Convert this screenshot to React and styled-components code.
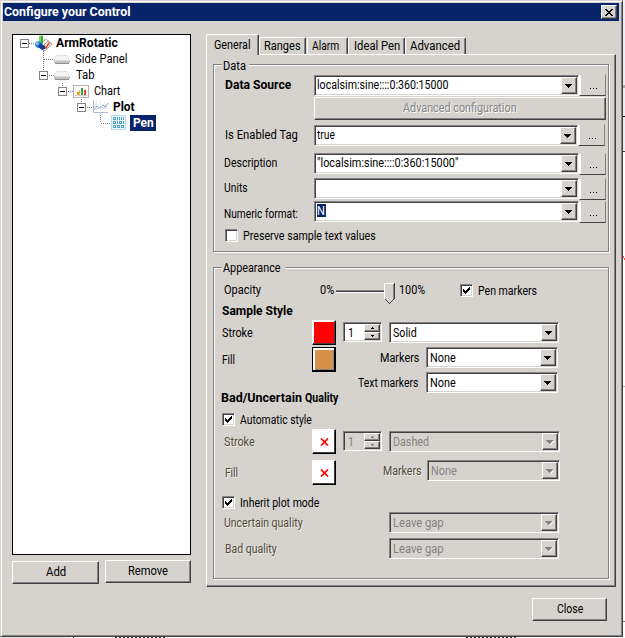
import React, { useLayoutEffect, useRef, useState } from 'react';
import styled, { createGlobalStyle, css } from 'styled-components';

const face = '#d6d3ce';
const shade = '#848284';
const dark = '#424142';
const navy = '#08246b';

const Global = createGlobalStyle`
  * { box-sizing: border-box; }
  html, body { margin: 0; overflow: hidden; }
  body { font: 12.5px/14px Roboto, "Liberation Sans", sans-serif; color: #000; }
  svg { display: block; flex: none; }
`;

const place = css`
  flex: none;
  margin-left: ${p => p.$ml || 0}px;
  margin-top: ${p => p.$mt || 0}px;
`;

const raised = css`
  background: ${face};
  border: 1px solid;
  border-color: #fff ${dark} ${dark} #fff;
  box-shadow: inset -1px -1px ${shade};
`;

const sunken = css`
  border: 1px solid;
  border-color: ${shade} #fff #fff ${shade};
  box-shadow: inset 1px 1px ${dark}, inset -1px -1px ${face};
`;

/* Text set to an exact width */
const TextBox = styled.span`
  ${place}
  display: block;
  width: ${p => p.$w}px;
  height: 14px;
  white-space: nowrap;
  font-weight: ${p => (p.$bold ? 700 : 400)};
  color: ${p => (p.$embossed ? '#4f4b3c' : p.$color || 'inherit')};
  text-shadow: ${p => (p.$embossed ? '1px 1px #eeebe2' : p.$relief ? '1px 1px #fff' : 'none')};
`;
const TextRun = styled.span`
  display: inline-block;
  transform-origin: 0 50%;
`;

function Text({ w, children, ...rest }) {
  const ref = useRef(null);
  const [scale, setScale] = useState(1);
  useLayoutEffect(() => {
    setScale(w / ref.current.offsetWidth);
  }, [w, children]);
  return (
    <TextBox $w={w} {...rest}>
      <TextRun ref={ref} style={{ transform: `scaleX(${scale})` }}>{children}</TextRun>
    </TextBox>
  );
}

const Desktop = styled.div`
  width: 625px;
  height: 638px;
  background:
    linear-gradient(#f44, #f44) 623px 256px / 1px 2px no-repeat,
    linear-gradient(#f44, #f44) 624px 258px / 1px 2px no-repeat,
    linear-gradient(#aaa, #aaa) 623px 85px / 2px 3px no-repeat,
    linear-gradient(#000, #000) 623px 116px / 2px 1px no-repeat,
    linear-gradient(${dark}, ${dark}) 623px 151px / 2px 1px no-repeat,
    linear-gradient(#aaa, #aaa) 623px 386px / 2px 1px no-repeat,
    linear-gradient(#777, #777) 623px 621px / 2px 1px no-repeat,
    linear-gradient(#000, #000) 73px 637px / 1px 1px no-repeat,
    repeating-linear-gradient(90deg, #333 0 2px, #fff 2px 4px) 115px 637px / 51px 1px no-repeat,
    repeating-linear-gradient(90deg, #333 0 2px, #fff 2px 4px) 466px 637px / 52px 1px no-repeat,
    linear-gradient(#e2e2e2, #e2e2e2) 0 637px / 70px 1px no-repeat,
    linear-gradient(#eeeefa 0 150px, #fff 152px);
`;

const Dialog = styled.main`
  width: 623px;
  height: 637px;
  background: ${face};
  border: 1px solid;
  border-color: ${face} ${dark} ${dark} ${face};
  box-shadow: inset 1px 1px #fff, inset -1px -1px ${shade};
  padding: 2px;
`;

const TitleBar = styled.header`
  display: flex;
  justify-content: space-between;
  width: 616px;
  height: 18px;
  padding: 2px 2px 2px 1px;
  background: ${navy};
  color: #fff;
`;
const CloseBox = styled.button`
  ${raised}
  width: 16px;
  height: 14px;
  padding: 2px 3px;
`;

const Body = styled.div`
  display: flex;
  padding: 13px 0 0 9px;
  gap: 15px;
`;
const Side = styled.aside`
  width: 179px;
`;
const TreeBox = styled.div`
  height: 521px;
  background: #fff;
  border: 1px solid #000;
`;
const TreeRow = styled.div`
  display: flex;
  height: 16px;
`;
const Selected = styled.span`
  flex: none;
  width: 26px;
  height: 16px;
  padding: 1px 0 0 3px;
  background: ${navy};
  color: #fff;
`;
const SideButtons = styled.div`
  display: flex;
  gap: 6px;
  padding-top: 5px;
`;
const Button = styled.button`
  ${raised}
  ${place}
  display: flex;
  justify-content: center;
  align-items: center;
  width: ${p => p.$w}px;
  height: ${p => p.$h || 23}px;
  padding: 0 0 2px;
  font: inherit;
  color: ${p => (p.disabled ? shade : '#000')};
`;

const Main = styled.section`
  width: 410px;
`;
const TabStrip = styled.nav`
  display: flex;
  align-items: flex-end;
  height: 20px;
`;
const Tab = styled.div`
  ${place}
  width: ${p => p.$w}px;
  height: ${p => (p.$active ? 21 : 17)}px;
  margin-bottom: ${p => (p.$active ? -1 : 0)}px;
  padding: ${p => (p.$active ? '3px 0 0 7px' : '1px 0 0 4px')};
  position: relative;
  background: ${face};
  border: 1px solid;
  border-color: #fff ${dark} transparent #fff;
  border-bottom: 0;
  border-radius: 2px 2px 0 0;
  box-shadow: inset -1px 0 ${shade};
`;
const Panel = styled.div`
  ${raised}
  height: 533px;
  padding: 9px 0 0 6px;
`;
const Group = styled.section`
  display: flex;
  flex-direction: column;
  width: 396px;
  height: ${p => p.$h}px;
  margin-bottom: 15px;
  border: 1px solid ${shade};
  box-shadow: inset 1px 1px #fff, 1px 1px #fff;
`;
const Legend = styled.div`
  flex: none;
  width: ${p => p.$w}px;
  height: 14px;
  margin: ${p => p.$up}px 0 0 8px;
  padding-left: 1px;
  background: ${face};
`;
const Row = styled.div`
  flex: none;
  display: flex;
  align-items: flex-start;
  height: ${p => p.$h}px;
`;
const Footer = styled.footer`
  display: flex;
  justify-content: flex-end;
  padding: 11px 13px 0 0;
`;

const ComboBox = styled.div`
  ${place}
  ${sunken}
  display: flex;
  justify-content: space-between;
  width: ${p => p.$w}px;
  height: 21px;
  padding: 1px;
  background: ${p => (p.$disabled ? face : '#fff')};
  color: ${p => (p.$disabled ? shade : '#000')};
`;
const ComboText = styled.div`
  padding: ${p => (p.$selected ? '0' : p.$tight ? '1px 0 0 1px' : '2px 0 0 2px')};
`;
const Marked = styled.span`
  display: block;
  width: 9px;
  height: 13px;
  margin: 1px 0 0 1px;
  background: ${navy};
  color: #fff;
  line-height: 13px;
`;
const DropButton = styled.span`
  ${raised}
  flex: none;
  display: flex;
  justify-content: center;
  width: 16px;
  height: 17px;
  padding-top: 6px;
`;

function DownArrow({ disabled }) {
  return (
    <svg width="8" height="5" shapeRendering="crispEdges">
      {disabled && <path d="M7 1h1v1H7v1H6v1H5v1H4V4h1V3h1V2h1z" fill="#fff" />}
      <path d="M0 0h7v1H6v1H5v1H4v1H3V3H2V2H1V1H0z" fill={disabled ? shade : '#000'} />
    </svg>
  );
}

function Combo({ text, w, tw, ml, mt, disabled, marked, tight }) {
  return (
    <ComboBox $w={w} $ml={ml} $mt={mt} $disabled={disabled}>
      <ComboText $selected={marked} $tight={tight}>
        {marked ? <Marked><Text w={8}>{text}</Text></Marked> : text && <Text w={tw}>{text}</Text>}
      </ComboText>
      <DropButton><DownArrow disabled={disabled} /></DropButton>
    </ComboBox>
  );
}

const More = styled.button`
  ${place}
  display: flex;
  justify-content: center;
  align-items: flex-end;
  width: 27px;
  height: 22px;
  padding: 0 0 6px 3px;
  background: ${face};
  border: 1px solid;
  border-color: ${face} ${shade} ${dark} #fff;
  box-shadow: inset 1px 0 #fff;
`;
function MoreButton({ mt }) {
  return (
    <More $mt={mt} aria-label="Browse">
      <svg width="8" height="1" shapeRendering="crispEdges"><path d="M0 0h1v1H0zM3 0h1v1H3zM6 0h1v1H6z" /></svg>
    </More>
  );
}

const Check = styled.span`
  ${sunken}
  ${place}
  width: 13px;
  height: 13px;
  padding: 2px;
  background: #fff;
`;
function CheckBox({ checked, ...rest }) {
  return (
    <Check {...rest}>
      {checked && (
        <svg width="7" height="7" shapeRendering="crispEdges">
          <path d="M0 2h1v1h1v1h1V3h1V2h1V1h1V0h1v3H6v1H5v1H4v1H3v1H2V6H1V5H0z" />
        </svg>
      )}
    </Check>
  );
}

const Swatch = styled.span`
  ${place}
  display: flex;
  align-items: center;
  justify-content: center;
  width: 24px;
  height: 25px;
  background: ${p => p.$fill};
  border: 1px solid;
  border-color: ${p => (p.$focus ? '#000' : '#fff #000 #000 #fff')};
  box-shadow: ${p => (p.$focus
    ? `inset -1px -1px #000, inset 2px 2px #fff, inset -2px -2px ${shade}`
    : `inset -1px -1px ${dark}, inset 1px 1px #fff`)};
`;
function Cross() {
  return (
    <svg width="9" height="8">
      <path d="M1 .5l7 7M8 .5l-7 7" stroke="#f00" strokeWidth="1.700" />
    </svg>
  );
}

const SpinBox = styled.div`
  ${place}
  ${sunken}
  display: flex;
  justify-content: space-between;
  width: 39px;
  height: 20px;
  padding: 1px 1px 1px 4px;
  background: ${p => (p.$disabled ? face : '#fff')};
  color: ${p => (p.$disabled ? shade : '#000')};
`;
const SpinButtons = styled.div`
  display: grid;
  grid-template-rows: 8px 8px;
  width: 16px;
`;
const SpinButton = styled.span`
  ${raised}
  display: flex;
  align-items: center;
  justify-content: center;
`;
function Spinner({ disabled, ...rest }) {
  const fill = disabled ? shade : '#000';
  return (
    <SpinBox $disabled={disabled} {...rest}>
      <Text w={6} $mt={2}>1</Text>
      <SpinButtons>
        <SpinButton><svg width="3" height="2" shapeRendering="crispEdges"><path fill={fill} d="M1 0h1v1h1v1H0V1h1z" /></svg></SpinButton>
        <SpinButton><svg width="3" height="2" shapeRendering="crispEdges"><path fill={fill} d="M0 0h3v1H2v1H1V1H0z" /></svg></SpinButton>
      </SpinButtons>
    </SpinBox>
  );
}

const SliderDrawing = styled.svg`
  ${place}
`;
function Slider() {
  return (
    <SliderDrawing $ml={2} $mt={8} width="60" height="21" shapeRendering="crispEdges">
      <path d="M0 7h48v1H0z" fill={shade} />
      <path d="M0 8h48v1H0z" fill={dark} />
      <path d="M0 9h48v1H0z" fill="#fff" />
      <path d="M48 0h11v16l-5 5-6-5z" fill={face} />
      <path d="M48 0h10v1h-9v15h-1z" fill="#fff" />
      <path d="M57 1h1v15h-1z" fill={shade} />
      <path d="M58 0h1v16h-1zM57 16h1v1h-1zM56 17h1v1h-1zM55 18h1v1h-1zM54 19h1v1h-1zM53 20h1v1h-1zM52 19h1v1h-1zM51 18h1v1h-1zM50 17h1v1h-1zM49 16h1v1h-1z" fill={dark} />
    </SliderDrawing>
  );
}

/* Tree artwork: coordinates start at the inner left edge of the tree */
const Expander = ({ x }) => (
  <g shapeRendering="crispEdges">
    <path d={`M${x} 4h9v9h-9z`} fill={shade} />
    <path d={`M${x + 1} 5h7v7h-7z`} fill="#fff" />
    <path d={`M${x + 2} 8h5v1h-5z`} />
  </g>
);
const Dots = ({ d }) => <path d={d} stroke="#777" strokeDasharray="1 1" fill="none" shapeRendering="crispEdges" />;
const Drive = ({ x }) => (
  <g transform={`translate(${x} 4)`}>
    <path d="M2 0h11l3 5v3H0V5z" fill="#e8e8e6" />
    <path d="M3 0h9l3 5H1z" fill="#f3f3f2" />
    <path d="M0 5h16v3H0z" fill="#c2c2c2" />
    <path d="M1 8.5h14" stroke="#929292" />
    <path d="M3 .5h10M1 5.5h14" stroke="#ddd" />
  </g>
);
const nodeArt = {
  arm: (
    <>
      <Dots d="M16 8.5h6M30.500 15v1" />
      <Expander x={7} />
      <g transform="translate(22 0)">
        <path d="M7 7l4-3 6 5-7 7-5-3z" fill="#eee" stroke="#aaa" />
        <path d="M9 10l4-4 2 2-4 5z" fill="#fff" stroke="#c98d66" />
        <path d="M9 12l2 1 3-5" stroke="#f04818" strokeWidth="1.5" fill="none" />
        <path d="M4 1q2-1 4 0v8H4z" fill="#35b52d" />
        <path d="M4 1h2v8H4z" fill="#75db4f" />
        <circle cx="3.500" cy="9.500" r="3.300" fill="#2784dc" />
        <circle cx="2.500" cy="8.500" r="1.500" fill="#78c4ff" />
        <path d="M5 8l5 3v3l-3 1-4-3z" fill="#153f91" />
      </g>
    </>
  ),
  side: <><Dots d="M30.500 0v16M31 8.500h9" /><Drive x={41} /></>,
  tab: <><Dots d="M30.500 0v4M36 8.500h5" /><Expander x={26} /><Drive x={41} /></>,
  chart: (
    <>
      <Dots d="M49.500 0v4M55 8.500h5" />
      <Expander x={45} />
      <g shapeRendering="crispEdges" transform="translate(60 2)">
        <path d="M0 0h16v13H0z" fill="#b5b2b0" />
        <path d="M1 1h14v11H1z" fill="#fbfaf9" />
        <path d="M2 10h12v1H2z" fill="#d0cfcd" />
        <path d="M4 7h2v3H4z" fill="#e7a025" />
        <path d="M6 5h1v5H6z" fill="#e7bd25" />
        <path d="M8 3h2v7H8z" fill="#29a43a" />
        <path d="M11 5h2v5h-2z" fill="#d7473b" />
      </g>
    </>
  ),
  plot: (
    <>
      <Dots d="M68.500 0v4M74 8.500h6" />
      <Expander x={64} />
      <g transform="translate(80 1)" fill="none">
        <path d="M3.500 1v10M7.500 1v10M11.500 1v10M0 4.500h15M0 8.500h15" stroke="#eef1f5" />
        <path d="M1 10l3-4 3 2 3-3 2 2 3-4" stroke="#889fc0" strokeWidth=".9" />
        <path d="M1 6l4 3 3-3 3 3 3-3" stroke="#b5c5da" strokeWidth=".9" />
        <path d="M.5 0v12.500H15" stroke="#a9bad5" />
      </g>
    </>
  ),
  pen: (
    <>
      <Dots d="M87.500 0v8M88 8.500h10" />
      <g transform="translate(98 0)" shapeRendering="crispEdges" fill="none">
        <path d="M0 0h15v15H0z" fill="#edf8fd" />
        <path d="M.5.500h14v14H.5z" stroke="#b2ddec" />
        <g stroke="#4aa5c6">
          <path d="M2.500 2.500h2v2h-2zM6.500 2v3M8.500 2v3M10.500 2v3M12.500 2v3" />
          <path d="M2.500 6.500h2v2h-2zM6.500 6v3M8.500 6.500h2v2h-2zM12.500 6v3" />
          <path d="M2.500 10.500h2v2h-2zM6.500 10.500h2v2h-2zM10.500 10.500h2v2h-2z" />
        </g>
      </g>
    </>
  ),
};
const nodes = [
  { art: 'arm', label: 'ArmRotatic', start: 43, w: 62, bold: true },
  { art: 'side', label: 'Side Panel', start: 62, w: 52 },
  { art: 'tab', label: 'Tab', start: 63, w: 19 },
  { art: 'chart', label: 'Chart', start: 81, w: 26 },
  { art: 'plot', label: 'Plot', start: 100, w: 22, bold: true },
  { art: 'pen', label: 'Pen', start: 117, w: 21, bold: true, selected: true },
];

function Tree() {
  return (
    <TreeBox>
      {nodes.map(n => (
        <TreeRow key={n.art}>
          <svg width={n.start} height="16">{nodeArt[n.art]}</svg>
          {n.selected
            ? <Selected><Text w={n.w} $bold>{n.label}</Text></Selected>
            : <Text w={n.w} $bold={n.bold} $mt={1}>{n.label}</Text>}
        </TreeRow>
      ))}
    </TreeBox>
  );
}

export default function App() {
  return (
    <Desktop>
      <Global />
      <Dialog>
        <TitleBar>
          <Text w={127} $bold>Configure your Control</Text>
          <CloseBox aria-label="Close">
            <svg width="8" height="7" shapeRendering="crispEdges">
              <path d="M0 0h2v1h1v1h2V1h1V0h2v1H7v1H6v1H5v1h1v1h1v1h1v1H6V6H5V5H3v1H2v1H0V6h1V5h1V4h1V3H2V2H1V1H0z" />
            </svg>
          </CloseBox>
        </TitleBar>
        <Body>
          <Side>
            <Tree />
            <SideButtons>
              <Button $w={87} $mt={1}><Text w={20}>Add</Text></Button>
              <Button $w={86}><Text w={40}>Remove</Text></Button>
            </SideButtons>
          </Side>
          <Main>
            <TabStrip>
              <Tab $w={53} $active><Text w={37}>General</Text></Tab>
              <Tab $w={47}><Text w={37}>Ranges</Text></Tab>
              <Tab $w={41} $ml={1}><Text w={27}>Alarm</Text></Tab>
              <Tab $w={57}><Text w={46} $ml={1}>Ideal Pen</Text></Tab>
              <Tab $w={61}><Text w={50}>Advanced</Text></Tab>
            </TabStrip>
            <Panel>
              <Group $h={188}>
                <Legend $w={27} $up={-6}><Text w={23}>Data</Text></Legend>
                <Row $h={24}>
                  <Text w={66} $bold $ml={11} $mt={5}>Data Source</Text>
                  <Combo tight text="localsim:sine::::0:360:15000" w={265} tw={131} ml={23} mt={2} />
                  <MoreButton mt={1} />
                </Row>
                <Row $h={27}>
                  <Button disabled $w={292} $h={23} $ml={100}><Text w={114} $relief>Advanced configuration</Text></Button>
                </Row>
                <Row $h={28}>
                  <Text w={73} $ml={11} $mt={4}>Is Enabled Tag</Text>
                  <Combo tight text="true" w={264} tw={18} ml={16} mt={1} />
                  <MoreButton mt={0} />
                </Row>
                <Row $h={26}>
                  <Text w={53} $ml={10} $mt={4}>Description</Text>
                  <Combo tight text={'"localsim:sine::::0:360:15000"'} w={265} tw={141} ml={37} mt={1} />
                  <MoreButton mt={1} />
                </Row>
                <Row $h={23}>
                  <Text w={24} $ml={10} $mt={3}>Units</Text>
                  <Combo w={265} ml={66} />
                  <MoreButton />
                </Row>
                <Row $h={27}>
                  <Text w={74} $ml={10} $mt={6}>Numeric format:</Text>
                  <Combo text="N" marked w={265} ml={16} />
                  <MoreButton />
                </Row>
                <Row $h={20}>
                  <CheckBox $ml={11} $mt={1} />
                  <Text w={133} $ml={5} $mt={1}>Preserve sample text values</Text>
                </Row>
              </Group>
              <Group $h={312}>
                <Legend $w={64} $up={-7}><Text w={58}>Appearance</Text></Legend>
                <Row $h={29}>
                  <Text w={37} $ml={10} $mt={8}>Opacity</Text>
                  <Text w={14} $ml={59} $mt={8}>0%</Text>
                  <Slider />
                  <Text w={26} $ml={3} $mt={8}>100%</Text>
                  <CheckBox checked $ml={35} $mt={9} />
                  <Text w={59} $ml={5} $mt={9}>Pen markers</Text>
                </Row>
                <Row $h={16}>
                  <Text w={71} $bold $ml={8}>Sample Style</Text>
                </Row>
                <Row $h={27}>
                  <Text w={31} $ml={8} $mt={6}>Stroke</Text>
                  <Swatch $fill="#f00" $ml={59} />
                  <Spinner $ml={7} $mt={2} />
                  <Combo text="Solid" w={170} tw={24} ml={7} mt={2} />
                </Row>
                <Row $h={25}>
                  <Text w={13} $ml={8} $mt={6}>Fill</Text>
                  <Swatch $fill="#d6924a" $focus $ml={77} />
                  <Text w={39} $ml={44} $mt={4}>Markers</Text>
                  <Combo text="None" w={132} tw={26} ml={7} />
                </Row>
                <Row $h={19}>
                  <Text w={60} $ml={144} $mt={4}>Text markers</Text>
                  <Combo text="None" w={132} tw={26} ml={8} />
                </Row>
                <Row $h={21}>
                  <Text w={81} $bold $ml={7}>Bad/Uncertain</Text>
                  <Text w={33} $bold $ml={3}>Quality</Text>
                </Row>
                <Row $h={17}>
                  <CheckBox checked $ml={8} $mt={1} />
                  <Text w={72} $ml={5} $mt={1}>Automatic style</Text>
                </Row>
                <Row $h={31}>
                  <Text w={31} $embossed $ml={10} $mt={6}>Stroke</Text>
                  <Swatch $fill="#fff" $ml={57}><Cross /></Swatch>
                  <Spinner disabled $ml={7} $mt={2} />
                  <Combo disabled text="Dashed" w={171} tw={36} ml={7} mt={2} />
                </Row>
                <Row $h={35}>
                  <Text w={13} $embossed $ml={11} $mt={6}>Fill</Text>
                  <Swatch $fill="#fff" $ml={74}><Cross /></Swatch>
                  <Text w={38} $embossed $ml={47} $mt={4}>Markers</Text>
                  <Combo disabled text="None" w={133} tw={26} ml={6} />
                </Row>
                <Row $h={17}>
                  <CheckBox checked $ml={8} $mt={1} />
                  <Text w={79} $ml={5} $mt={1}>Inherit plot mode</Text>
                </Row>
                <Row $h={26}>
                  <Text w={79} $embossed $ml={10} $mt={4}>Uncertain quality</Text>
                  <Combo disabled text="Leave gap" w={170} tw={51} ml={86} />
                </Row>
                <Row $h={26}>
                  <Text w={52} $embossed $ml={11} $mt={4}>Bad quality</Text>
                  <Combo disabled text="Leave gap" w={170} tw={51} ml={112} />
                </Row>
              </Group>
            </Panel>
          </Main>
        </Body>
        <Footer>
          <Button $w={75}><Text w={26}>Close</Text></Button>
        </Footer>
      </Dialog>
    </Desktop>
  );
}
